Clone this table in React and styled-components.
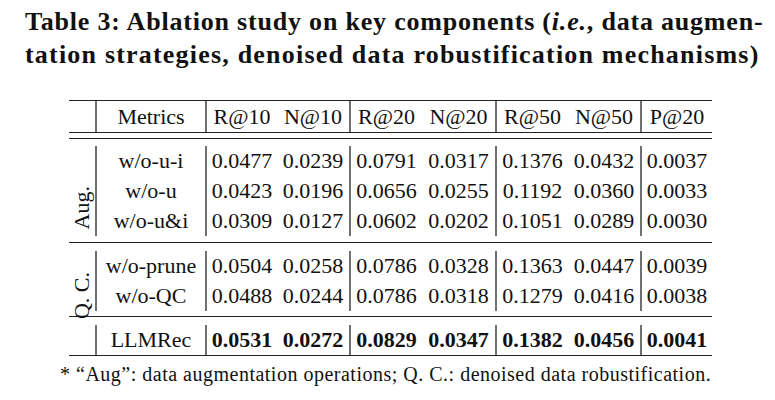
import React from 'react';
import styled, { createGlobalStyle } from 'styled-components';

const GlobalStyle = createGlobalStyle`
  body {
    margin: 0;
    background: #ffffff;
    font-family: 'Liberation Serif', 'Times New Roman', serif;
    color: #111111;
  }
`;

const Page = styled.div`
  display: flex;
  flex-direction: column;
  align-items: flex-start;
  padding-top: 5px;
`;

const Title = styled.div`
  margin-left: 25px;
  width: 738px;
  font-weight: 700;
  font-size: 26px;
  line-height: 33px;
`;

const TitleLine = styled.div`
  text-align: ${(p) => (p.$justify ? 'justify' : 'left')};
  text-align-last: ${(p) => (p.$justify ? 'justify' : 'left')};
  letter-spacing: ${(p) => (p.$justify ? 0.8 : 1.2)}px;
  white-space: nowrap;
`;

const Table = styled.table`
  margin-top: 29px;
  margin-left: 69px;
  width: 643px;
  table-layout: fixed;
  border-collapse: separate;
  border-spacing: 0;
  font-size: 22px;
`;

const RuleCell = styled.td`
  padding: 0;
  height: ${(p) => p.$gap}px;
  border-top: ${(p) => (p.$line ? '1px solid #222222' : 'none')};
`;

const Cell = styled.td`
  padding: 0;
  height: ${(p) => p.$h || 30}px;
  text-align: center;
  vertical-align: middle;
  white-space: nowrap;
  box-sizing: border-box;
  border-left: ${(p) => (p.$sep ? '2px solid #707070' : 'none')};
  font-weight: ${(p) => (p.$bold ? 700 : 400)};
`;

const LabelCell = styled.td`
  padding: 0;
  vertical-align: middle;
  text-align: center;
`;

const SideLabel = styled.div`
  writing-mode: vertical-rl;
  transform: rotate(180deg) translateY(-${(p) => p.$shift}px);
  line-height: 1;
  margin: 0 auto;
  white-space: nowrap;
`;

const Footnote = styled.div`
  margin-top: 6px;
  margin-left: 60px;
  font-size: 20px;
  line-height: 24px;
  letter-spacing: 0.5px;
`;

const widths = [26, 110, 72, 72, 73, 73, 73, 72, 72];
const metrics = ['R@10', 'N@10', 'R@20', 'N@20', 'R@50', 'N@50', 'P@20'];
const sepAt = [true, false, true, false, true, false, true];

const groups = [
  {
    label: 'Aug.',
    shift: 17,
    rows: [
      ['w/o-u-i', '0.0477', '0.0239', '0.0791', '0.0317', '0.1376', '0.0432', '0.0037'],
      ['w/o-u', '0.0423', '0.0196', '0.0656', '0.0255', '0.1192', '0.0360', '0.0033'],
      ['w/o-u&i', '0.0309', '0.0127', '0.0602', '0.0202', '0.1051', '0.0289', '0.0030'],
    ],
    after: 6,
  },
  {
    label: 'Q. C.',
    shift: 15,
    rows: [
      ['w/o-prune', '0.0504', '0.0258', '0.0786', '0.0328', '0.1363', '0.0447', '0.0039'],
      ['w/o-QC', '0.0488', '0.0244', '0.0786', '0.0318', '0.1279', '0.0416', '0.0038'],
    ],
    after: 5,
  },
];

const best = ['LLMRec', '0.0531', '0.0272', '0.0829', '0.0347', '0.1382', '0.0456', '0.0041'];

const Rule = ({ gap = 0, line = true }) => (
  <tr>
    <RuleCell colSpan={9} $gap={gap} $line={line} />
  </tr>
);

const DataCells = ({ values, bold }) =>
  values.map((v, i) => (
    <Cell key={i} $sep={sepAt[i]} $bold={bold}>
      {v}
    </Cell>
  ));

export default function App() {
  return (
    <Page>
      <GlobalStyle />
      <Title>
        <TitleLine $justify>
          Table 3: Ablation study on key components (<i>i.e.</i>, data augmen-
        </TitleLine>
        <TitleLine>tation strategies, denoised data robustification mechanisms)</TitleLine>
      </Title>

      <Table>
        <colgroup>
          {widths.map((w, i) => (
            <col key={i} style={{ width: w }} />
          ))}
        </colgroup>
        <tbody>
          <Rule />
          <tr>
            <Cell $h={31} />
            <Cell $h={31} $sep>
              Metrics
            </Cell>
            {metrics.map((m, i) => (
              <Cell key={m} $h={31} $sep={sepAt[i]}>
                {m}
              </Cell>
            ))}
          </tr>
          <Rule gap={5} />
          <Rule gap={7} />

          {groups.map((g) => (
            <React.Fragment key={g.label}>
              {g.rows.map((r, ri) => (
                <tr key={r[0]}>
                  {ri === 0 && (
                    <LabelCell rowSpan={g.rows.length}>
                      <SideLabel $shift={g.shift}>{g.label}</SideLabel>
                    </LabelCell>
                  )}
                  <Cell $sep>{r[0]}</Cell>
                  <DataCells values={r.slice(1)} />
                </tr>
              ))}
              <Rule gap={g.after} line={false} />
              <Rule gap={8} />
            </React.Fragment>
          ))}

          <tr>
            <Cell />
            <Cell $sep>{best[0]}</Cell>
            <DataCells values={best.slice(1)} bold />
          </tr>
          <Rule />
        </tbody>
      </Table>

      <Footnote>* “Aug”: data augmentation operations; Q. C.: denoised data robustification.</Footnote>
    </Page>
  );
}
